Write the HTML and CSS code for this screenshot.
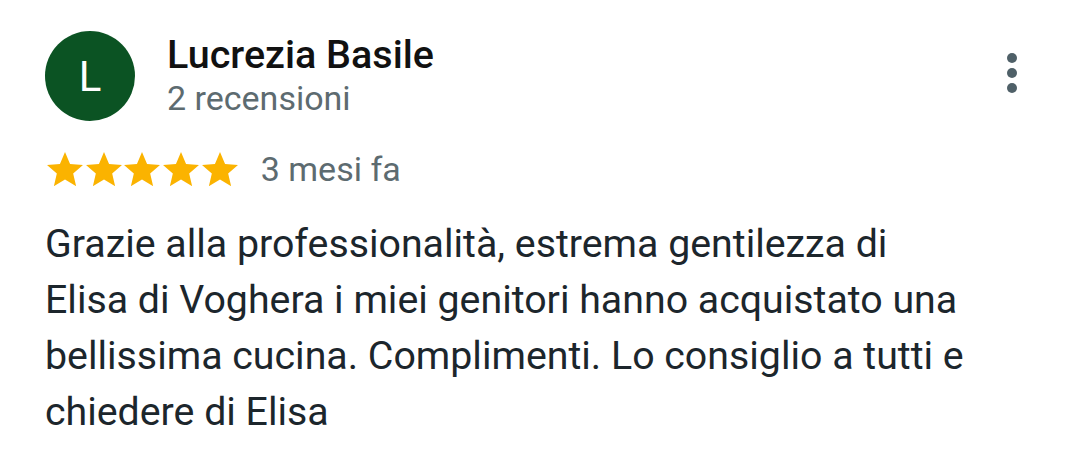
FILE: index.html
```html
<!DOCTYPE html>
<html lang="it">
<head>
<meta charset="utf-8">
<link rel="stylesheet" href="styles.css">
</head>
<body>
<div class="review">
  <div class="header">
    <div class="avatar">L</div>
    <div class="who">
      <div class="name">Lucrezia Basile</div>
      <div class="count">2 recensioni</div>
    </div>
    <div class="menu"><span></span><span></span><span></span></div>
  </div>
  <div class="rating">
    <div class="stars">
      <svg viewBox="2 2 20 19"><path d="M12 17.27L18.18 21l-1.64-7.03L22 9.24l-7.19-.61L12 2 9.19 8.63 2 9.24l5.46 4.73L5.82 21z"/></svg>
      <svg viewBox="2 2 20 19"><path d="M12 17.27L18.18 21l-1.64-7.03L22 9.24l-7.19-.61L12 2 9.19 8.63 2 9.24l5.46 4.73L5.82 21z"/></svg>
      <svg viewBox="2 2 20 19"><path d="M12 17.27L18.18 21l-1.64-7.03L22 9.24l-7.19-.61L12 2 9.19 8.63 2 9.24l5.46 4.73L5.82 21z"/></svg>
      <svg viewBox="2 2 20 19"><path d="M12 17.27L18.18 21l-1.64-7.03L22 9.24l-7.19-.61L12 2 9.19 8.63 2 9.24l5.46 4.73L5.82 21z"/></svg>
      <svg viewBox="2 2 20 19"><path d="M12 17.27L18.18 21l-1.64-7.03L22 9.24l-7.19-.61L12 2 9.19 8.63 2 9.24l5.46 4.73L5.82 21z"/></svg>
    </div>
    <span class="date">3 mesi fa</span>
  </div>
  <p class="text">Grazie alla professionalità, estrema gentilezza di<br>Elisa di Voghera i miei genitori hanno acquistato una<br>bellissima cucina. Complimenti. Lo consiglio a tutti e<br>chiedere di Elisa</p>
</div>
</body>
</html>
```
FILE: styles.css
```css
html, body {
  margin: 0;
  padding: 0;
  background: #ffffff;
}
body {
  font-family: Roboto, "Noto Sans", sans-serif;
  width: 1080px;
  height: 458px;
  overflow: hidden;
}
.review {
  padding: 31px 0 0 45px;
}
.header {
  display: flex;
  align-items: flex-start;
}
.avatar {
  width: 90px;
  height: 90px;
  border-radius: 50%;
  background: #0b5323;
  color: #ffffff;
  font-size: 42px;
  display: flex;
  align-items: center;
  justify-content: center;
  flex: none;
}
.who {
  margin-left: 32px;
  margin-top: 2px;
}
.name {
  font-size: 39.5px;
  font-weight: 500;
  color: #111111;
  line-height: 44px;
}
.count {
  font-size: 34px;
  color: #5d6b70;
  line-height: 40px;
  margin-top: 1px;
}
.menu {
  margin-left: auto;
  margin-right: 63px;
  margin-top: 22px;
  display: flex;
  flex-direction: column;
  gap: 5px;
}
.menu span {
  display: block;
  width: 10px;
  height: 10px;
  border-radius: 50%;
  background: #4f6068;
}
.rating {
  display: flex;
  align-items: center;
  height: 38px;
  margin-top: 29px;
  margin-left: 2px;
}
.stars {
  display: flex;
  gap: 2.7px;
}
.stars svg {
  width: 36px;
  height: 34.2px;
  fill: #fbb300;
}
.date {
  margin-left: 23px;
  font-size: 34px;
  line-height: 38px;
  color: #5d6b70;
}
.text {
  margin: 28px 0 0 0;
  font-size: 39.3px;
  line-height: 56px;
  color: #1c262c;
}
```
